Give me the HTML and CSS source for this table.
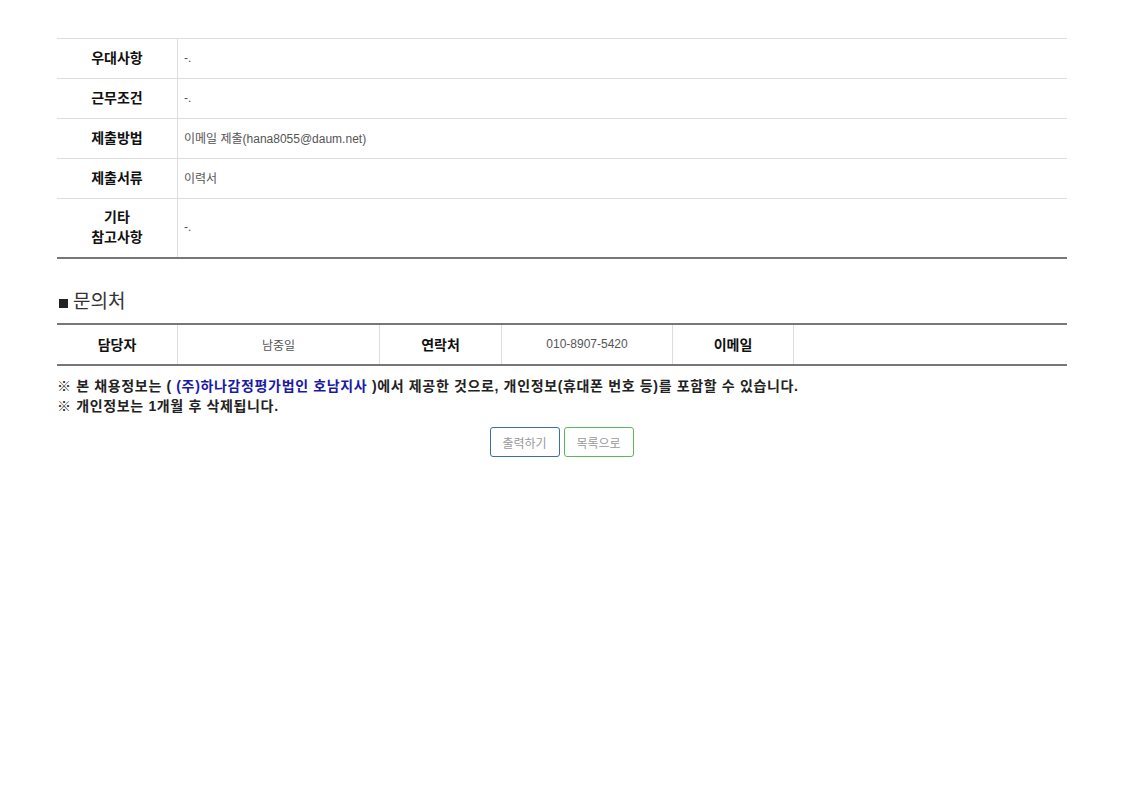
FILE: index.html
```html
<!DOCTYPE html>
<html lang="ko">
<head>
    <meta charset="UTF-8">
    <meta name="viewport" content="width=device-width, initial-scale=1.0">
    <title>채용정보 상세</title>
    <link rel="stylesheet" href="styles.css">
</head>
<body>
    <div class="wrap">
        <table class="info-table">
            <tr>
                <th>우대사항</th>
                <td>-.</td>
            </tr>
            <tr>
                <th>근무조건</th>
                <td>-.</td>
            </tr>
            <tr>
                <th>제출방법</th>
                <td>이메일 제출(hana8055@daum.net)</td>
            </tr>
            <tr>
                <th>제출서류</th>
                <td>이력서</td>
            </tr>
            <tr class="tall">
                <th>기타<br>참고사항</th>
                <td>-.</td>
            </tr>
        </table>

        <h3 class="sub-title"><span class="square"></span>문의처</h3>

        <table class="contact-table">
            <tr>
                <th class="c1">담당자</th>
                <td class="c2">남중일</td>
                <th class="c3">연락처</th>
                <td class="c4">010-8907-5420</td>
                <th class="c5">이메일</th>
                <td class="c6"></td>
            </tr>
        </table>

        <div class="notice">
            <p>※ 본 채용정보는 ( <span class="company">(주)하나감정평가법인 호남지사</span> )에서 제공한 것으로, 개인정보(휴대폰 번호 등)를 포함할 수 있습니다.</p>
            <p>※ 개인정보는 1개월 후 삭제됩니다.</p>
        </div>

        <div class="buttons">
            <button class="btn btn-print">출력하기</button>
            <button class="btn btn-list">목록으로</button>
        </div>
    </div>
</body>
</html>
```

FILE: styles.css
```css
body {
    margin: 0;
    padding: 0;
    background: #fff;
    font-family: "Liberation Sans", "Noto Sans CJK KR", sans-serif;
    color: #222;
}
.wrap {
    width: 1010px;
    margin-left: 57px;
    padding-top: 38px;
}
table {
    border-collapse: collapse;
    width: 100%;
}
.info-table {
    border-top: 1px solid #ddd;
    border-bottom: 2px solid #777;
}
.info-table th,
.info-table td {
    height: 37px;
    padding: 0 0 2px;
    border-bottom: 1px solid #ddd;
}
.info-table tr:last-child th,
.info-table tr:last-child td {
    border-bottom: none;
}
.info-table .tall th,
.info-table .tall td {
    height: 56px;
}
.info-table th {
    width: 120px;
    font-size: 14px;
    font-weight: bold;
    color: #111;
    line-height: 20px;
    border-right: 1px solid #ddd;
}
.info-table td {
    padding-left: 6px;
    font-size: 12px;
    color: #555;
}
.sub-title {
    margin: 31px 0 9px 2px;
    font-size: 19px;
    font-weight: normal;
    color: #333;
    display: flex;
    align-items: center;
    line-height: 24px;
}
.square {
    width: 9px;
    height: 9px;
    background: #222;
    margin-right: 5px;
    margin-top: 2px;
}
.contact-table {
    border-top: 2px solid #777;
    border-bottom: 2px solid #777;
}
.contact-table th,
.contact-table td {
    height: 38px;
    padding: 0 0 1px;
    text-align: center;
    border-right: 1px solid #ddd;
}
.contact-table th {
    font-size: 14px;
    font-weight: bold;
    color: #111;
}
.contact-table td {
    font-size: 12px;
    color: #555;
}
.contact-table .c6 {
    border-right: none;
}
.c1 { width: 120px; }
.c2 { width: 201px; }
.c3 { width: 121px; }
.c4 { width: 170px; }
.c5 { width: 120px; }
.notice {
    margin-top: 10px;
}
.notice p {
    margin: 0;
    font-size: 14px;
    font-weight: bold;
    line-height: 20px;
    letter-spacing: 0.65px;
    color: #222;
}
.company {
    color: #1a1aa6;
}
.buttons {
    display: flex;
    justify-content: center;
    gap: 4px;
    margin-top: 11px;
    padding-right: 1px;
}
.btn {
    width: 70px;
    height: 30px;
    background: #fff;
    border-radius: 3px;
    font-family: inherit;
    font-size: 12px;
    color: #999;
    cursor: pointer;
}
.btn-print {
    border: 1px solid #3b6ea5;
}
.btn-list {
    border: 1px solid #5cb85c;
}
```
